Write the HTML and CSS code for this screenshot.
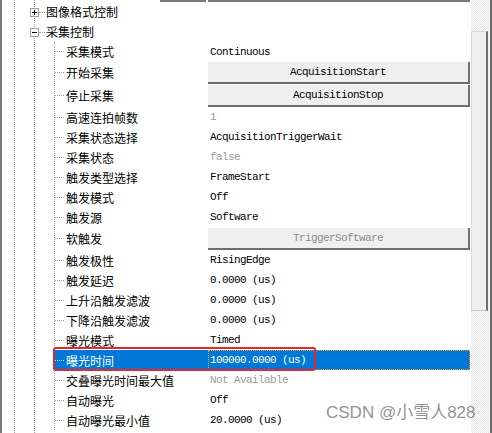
FILE: index.html
```html
<!DOCTYPE html>
<html lang="zh-CN">
<head>
    <meta charset="UTF-8">
    <title>采集控制</title>
    <link rel="stylesheet" href="styles.css">
</head>
<body>
    <div class="panel">
        <div class="tree">
            <div class="top-edge"><span class="edge-left"></span><span class="edge-right"></span></div>

            <div class="node">
                <svg class="toggle" width="9" height="9" viewBox="0 0 9 9"><rect x="0.5" y="0.5" width="8" height="8" fill="#fff" stroke="#a0a0a0"/><path d="M2 4.5H7M4.5 2V7" stroke="#000"/></svg>
                <span class="hline"></span>
                <span class="label">图像格式控制</span>
            </div>
            <div class="node">
                <svg class="toggle" width="9" height="9" viewBox="0 0 9 9"><rect x="0.5" y="0.5" width="8" height="8" fill="#fff" stroke="#a0a0a0"/><path d="M2 4.5H7" stroke="#000"/></svg>
                <span class="hline"></span>
                <span class="label">采集控制</span>
            </div>

            <div class="children">
                <div class="row short"><span class="conn"></span><span class="name">采集模式</span><span class="value">Continuous</span></div>
                <div class="row btn-row"><span class="conn"></span><span class="name">开始采集</span><span class="value"><span class="btn">AcquisitionStart</span></span></div>
                <div class="row btn-row"><span class="conn"></span><span class="name">停止采集</span><span class="value"><span class="btn">AcquisitionStop</span></span></div>
                <div class="row"><span class="conn"></span><span class="name">高速连拍帧数</span><span class="value muted">1</span></div>
                <div class="row"><span class="conn"></span><span class="name">采集状态选择</span><span class="value">AcquisitionTriggerWait</span></div>
                <div class="row"><span class="conn"></span><span class="name">采集状态</span><span class="value muted">false</span></div>
                <div class="row"><span class="conn"></span><span class="name">触发类型选择</span><span class="value">FrameStart</span></div>
                <div class="row"><span class="conn"></span><span class="name">触发模式</span><span class="value">Off</span></div>
                <div class="row"><span class="conn"></span><span class="name">触发源</span><span class="value">Software</span></div>
                <div class="row btn-row"><span class="conn"></span><span class="name">软触发</span><span class="value"><span class="btn disabled">TriggerSoftware</span></span></div>
                <div class="row"><span class="conn"></span><span class="name">触发极性</span><span class="value">RisingEdge</span></div>
                <div class="row"><span class="conn"></span><span class="name">触发延迟</span><span class="value">0.0000 (us)</span></div>
                <div class="row"><span class="conn"></span><span class="name">上升沿触发滤波</span><span class="value">0.0000 (us)</span></div>
                <div class="row"><span class="conn"></span><span class="name">下降沿触发滤波</span><span class="value">0.0000 (us)</span></div>
                <div class="row"><span class="conn"></span><span class="name">曝光模式</span><span class="value">Timed</span></div>
                <div class="row selected"><span class="conn"></span><span class="name">曝光时间</span><span class="value focus">100000.0000 (us)</span></div>
                <div class="row"><span class="conn"></span><span class="name">交叠曝光时间最大值</span><span class="value muted">Not Available</span></div>
                <div class="row"><span class="conn"></span><span class="name">自动曝光</span><span class="value">Off</span></div>
                <div class="row"><span class="conn"></span><span class="name">自动曝光最小值</span><span class="value">20.0000 (us)</span></div>
            </div>
        </div>

        <div class="scrollbar"><div class="thumb"></div></div>

        <!-- annotation over the selected row -->
        <div class="mark"></div>
        <div class="watermark">CSDN @小雪人828</div>
    </div>
</body>
</html>
```

FILE: styles.css
```css
body {
    margin: 0;
    background: #fff;
}
.panel {
    position: relative;
    display: flex;
    width: 492px;
    height: 433px;
    overflow: hidden;
    font-family: "Noto Sans CJK SC", sans-serif;
    font-size: 12px;
    color: #000;
}
.tree {
    width: 469px;
    border-left: 2px solid #7a7a7a;
    background-image:
        repeating-linear-gradient(to bottom, #a0a0a0 0 1px, transparent 1px 2px),
        repeating-linear-gradient(to bottom, #a0a0a0 0 1px, transparent 1px 2px);
    background-size: 1px 100%, 1px 100%;
    background-position: 12px 0, 32px 0;
    background-repeat: no-repeat;
}
.top-edge {
    display: flex;
    height: 2px;
}
.edge-left {
    margin-left: 158px;
    width: 46px;
    background: #7a7a7a;
}
.edge-right {
    margin-left: 2px;
    width: 262px;
    background: #7a7a7a;
}
.node {
    display: flex;
    align-items: center;
    height: 20px;
    padding-left: 28px;
}
.toggle {
    display: block;
    flex: none;
    shape-rendering: crispEdges;
}
.hline {
    width: 6px;
    border-top: 1px dotted #a0a0a0;
    margin-right: 1px;
}
.label {
    line-height: 20px;
}
.children {
    margin-left: 52px;
    border-left: 1px dotted #a0a0a0;
    padding-right: 1px;
}
.row {
    display: flex;
    align-items: center;
    height: 20px;
}
.row.short {
    height: 19px;
}
.row.btn-row {
    height: 23px;
}
.conn {
    width: 9px;
    border-top: 1px dotted #a0a0a0;
    margin-right: 2px;
}
.name {
    width: 142px;
    white-space: nowrap;
}
.value {
    box-sizing: border-box;
    width: 262px;
    height: 100%;
    display: flex;
    align-items: center;
    padding-left: 2px;
    font-family: "Liberation Mono", monospace;
    font-size: 11px;
    letter-spacing: -0.6px;
    white-space: nowrap;
}
.value.muted {
    color: #9a9a9a;
}
.btn-row .value {
    padding: 1px 0 0;
    align-items: stretch;
}
.btn {
    flex: 1;
    display: flex;
    align-items: center;
    justify-content: center;
    background: #efefef;
    border-right: 2px solid #6e6e6e;
    border-bottom: 2px solid #6e6e6e;
}
.btn.disabled {
    color: #8c8c8c;
}
.row.selected {
    background: #0078d7;
    color: #fff;
}
.row.selected .conn {
    border-top-color: #cfe4f7;
}
.value.focus {
    outline: 1px dotted #ff9a1f;
    outline-offset: -1px;
}
.scrollbar {
    box-sizing: border-box;
    width: 21px;
    height: 100%;
    border-right: 2px solid #6e6e6e;
    background: repeating-conic-gradient(#e4e4e4 0 25%, #fff 0 50%) 0 0 / 2px 2px;
}
.thumb {
    box-sizing: border-box;
    margin-top: 31px;
    width: 17px;
    height: 280px;
    background: #efefef;
    border-left: 1px solid #dadada;
    border-top: 1px solid #dadada;
    border-right: 2px solid #6e6e6e;
    border-bottom: 1px solid #c8c8c8;
}
.mark {
    position: absolute;
    left: 53px;
    top: 347px;
    width: 263px;
    height: 24px;
    box-sizing: border-box;
    border: 2px solid #e8262b;
    border-radius: 3px;
}
.watermark {
    position: absolute;
    left: 326px;
    top: 401px;
    font-family: "Liberation Sans", "Noto Sans CJK SC", sans-serif;
    font-size: 17px;
    line-height: 24px;
    color: rgba(110, 110, 110, 0.75);
    white-space: nowrap;
}
```
